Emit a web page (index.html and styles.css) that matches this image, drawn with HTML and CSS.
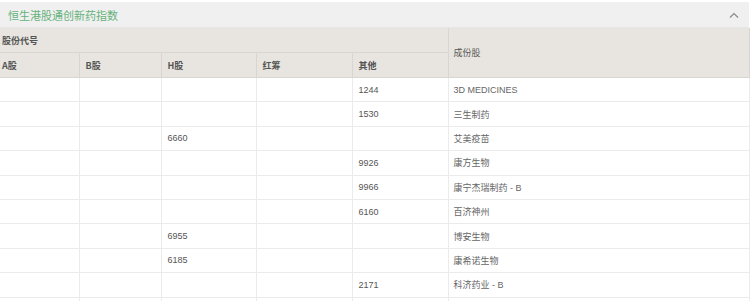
FILE: index.html
```html
<!DOCTYPE html>
<html lang="zh">
<head>
<meta charset="utf-8">
<link rel="stylesheet" href="styles.css">
</head>
<body>
<div class="panel">
  <div class="panel-head">
    <span class="title">恒生港股通创新药指数</span>
    <svg class="chev" width="10" height="6" viewBox="0 0 10 6"><path d="M1 5.5 L5 1.5 L9 5.5" fill="none" stroke="#888" stroke-width="1.1"/></svg>
  </div>
  <table class="grid">
    <colgroup>
      <col class="c-a"><col class="c-b"><col class="c-h"><col class="c-r"><col class="c-o"><col class="c-n">
    </colgroup>
    <thead>
      <tr class="h1"><th colspan="5">股份代号</th><th rowspan="2" class="name-h">成份股</th></tr>
      <tr class="h2"><th>A股</th><th>B股</th><th>H股</th><th>红筹</th><th>其他</th></tr>
    </thead>
    <tbody>
      <tr><td></td><td></td><td></td><td></td><td>1244</td><td>3D MEDICINES</td></tr>
      <tr><td></td><td></td><td></td><td></td><td>1530</td><td>三生制药</td></tr>
      <tr><td></td><td></td><td>6660</td><td></td><td></td><td>艾美疫苗</td></tr>
      <tr><td></td><td></td><td></td><td></td><td>9926</td><td>康方生物</td></tr>
      <tr><td></td><td></td><td></td><td></td><td>9966</td><td>康宁杰瑞制药 - B</td></tr>
      <tr><td></td><td></td><td></td><td></td><td>6160</td><td>百济神州</td></tr>
      <tr><td></td><td></td><td>6955</td><td></td><td></td><td>博安生物</td></tr>
      <tr><td></td><td></td><td>6185</td><td></td><td></td><td>康希诺生物</td></tr>
      <tr><td></td><td></td><td></td><td></td><td>2171</td><td>科济药业 - B</td></tr>
      <tr><td></td><td></td><td></td><td></td><td></td><td></td></tr>
    </tbody>
  </table>
</div>
</body>
</html>
```
FILE: styles.css
```css
html, body {
  margin: 0;
  padding: 0;
  background: #ffffff;
}
body {
  font-family: "Liberation Sans", "Noto Sans CJK SC", sans-serif;
  color: #555;
  overflow: hidden;
  height: 301px;
}
.panel {
  width: 749px;
  padding-top: 2px;
}
.panel-head {
  height: 25px;
  background: #f0f0f0;
  display: flex;
  align-items: center;
  justify-content: space-between;
  padding: 0 10px 0 8px;
  border-bottom: 1px solid #e6e6e6;
}
.title {
  color: #66b27c;
  font-size: 11px;
  font-family: "Noto Sans CJK SC", sans-serif;
}
.chev {
  display: block;
}
.grid {
  width: 749px;
  border-collapse: collapse;
  table-layout: fixed;
}
.c-a { width: 79px; }
.c-b { width: 82px; }
.c-h { width: 95px; }
.c-r { width: 96px; }
.c-o { width: 96px; }
.c-n { width: 301px; }
.grid th {
  background: #e8e5e0;
  text-align: left;
  font-weight: bold;
  color: #555;
  padding: 0 0 0 6px;
  border: 1px solid #d9d6d1;
  border-top: none;
  font-family: "Noto Sans CJK SC", sans-serif;
  font-size: 9px;
}
.grid th:first-child { border-left: none; padding-left: 2px; }
.grid .h1 th { height: 24px; }
.grid .h2 th { height: 24px; }
.grid .name-h { font-weight: normal; padding-left: 5px; }
.grid td {
  height: 23.4px;
  padding: 0 0 0 6px;
  border: 1px solid #ebebeb;
  border-top: none;
  color: #555;
  font-size: 9px;
  font-family: "Liberation Sans", "Noto Sans CJK SC", sans-serif;
}
.grid td:first-child { border-left: none; }
.grid td:last-child { padding-left: 5px; color: #666; }
```
